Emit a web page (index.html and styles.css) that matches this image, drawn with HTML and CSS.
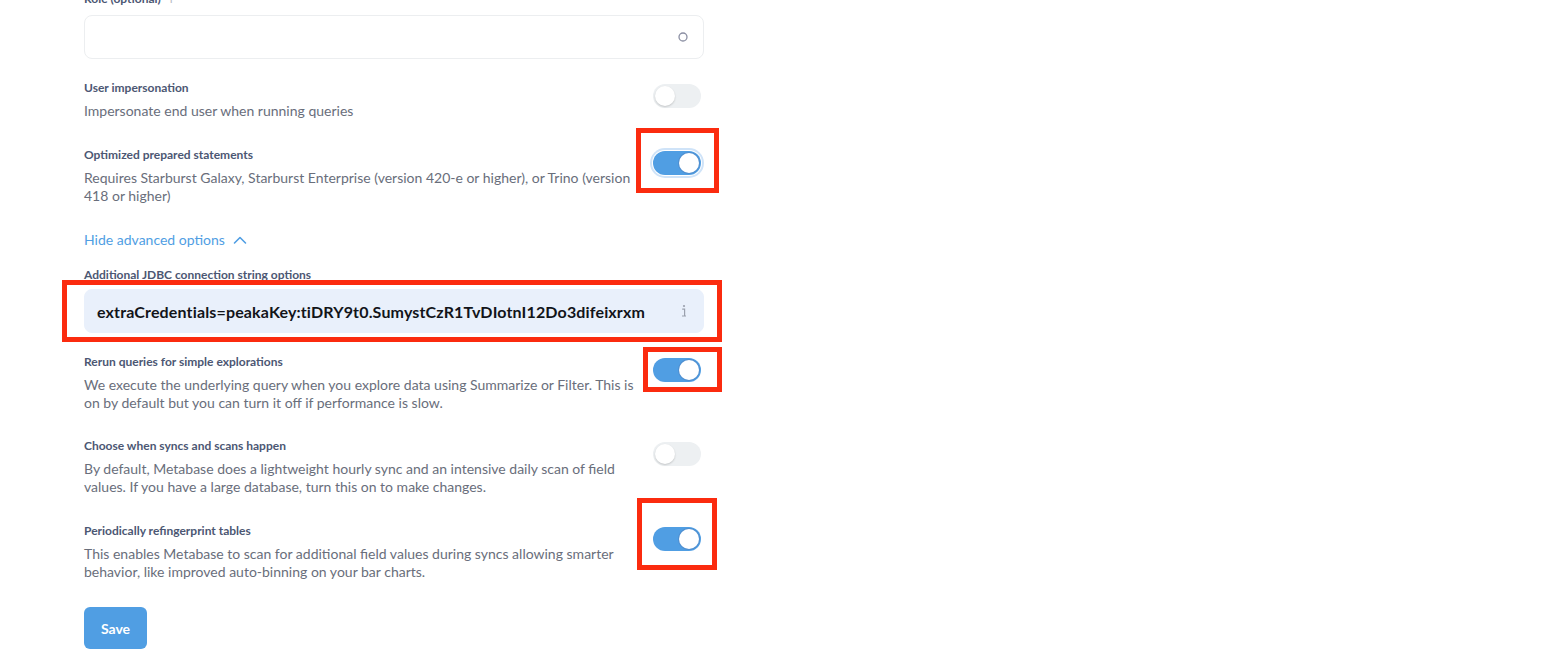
FILE: index.html
```html
<!DOCTYPE html>
<html>
<head>
<meta charset="utf-8">
<link rel="stylesheet" href="styles.css">
</head>
<body>
<div class="page">
  <div class="field">
    <div class="field-label">Role (optional) <span class="info-mark">i</span></div>
    <div class="input">
      <svg class="input-icon" width="12" height="12" viewBox="0 0 12 12"><circle cx="6" cy="6" r="4" fill="none" stroke="#8b8fa3" stroke-width="1.3"/></svg>
    </div>
  </div>

  <div class="setting s-first">
    <div class="setting-text">
      <div class="field-label">User impersonation</div>
      <div class="desc">Impersonate end user when running queries</div>
    </div>
    <div class="toggle"><span class="knob"></span></div>
  </div>

  <div class="setting s-gap">
    <div class="setting-text">
      <div class="field-label">Optimized prepared statements</div>
      <div class="desc">Requires Starburst Galaxy, Starburst Enterprise (version 420-e or higher), or Trino (version 418 or higher)</div>
    </div>
    <div class="toggle on focused"><span class="knob"></span></div>
  </div>

  <div class="advanced">
    <span>Hide advanced options</span>
    <svg width="14" height="10" viewBox="0 0 14 10"><path d="M1.5 8 L7 2.5 L12.5 8" fill="none" stroke="#509ee3" stroke-width="1.6" stroke-linecap="round" stroke-linejoin="round"/></svg>
  </div>

  <div class="field jdbc">
    <div class="field-label">Additional JDBC connection string options</div>
    <div class="input filled">
      <span class="input-value">extraCredentials=peakaKey:tiDRY9t0.SumystCzR1TvDIotnI12Do3difeixrxm</span>
      <svg class="input-icon" width="10" height="14" viewBox="0 0 10 14"><circle cx="5" cy="2" r="1.1" fill="#9aa0ad"/><path d="M3.2 5.2 H5.6 V11.8 M3 12 H7" fill="none" stroke="#9aa0ad" stroke-width="1.2"/></svg>
    </div>
  </div>

  <div class="setting s-after-input">
    <div class="setting-text">
      <div class="field-label">Rerun queries for simple explorations</div>
      <div class="desc">We execute the underlying query when you explore data using Summarize or Filter. This is on by default but you can turn it off if performance is slow.</div>
    </div>
    <div class="toggle on"><span class="knob"></span></div>
  </div>

  <div class="setting s-gap-tight">
    <div class="setting-text">
      <div class="field-label">Choose when syncs and scans happen</div>
      <div class="desc">By default, Metabase does a lightweight hourly sync and an intensive daily scan of field values. If you have a large database, turn this on to make changes.</div>
    </div>
    <div class="toggle"><span class="knob"></span></div>
  </div>

  <div class="setting s-gap">
    <div class="setting-text">
      <div class="field-label">Periodically refingerprint tables</div>
      <div class="desc">This enables Metabase to scan for additional field values during syncs allowing smarter behavior, like improved auto-binning on your bar charts.</div>
    </div>
    <div class="toggle on"><span class="knob"></span></div>
  </div>

  <button class="save">Save</button>
</div>

<div class="mark m1"></div>
<div class="mark m2"></div>
<div class="mark m3"></div>
<div class="mark m4"></div>
</body>
</html>
```

FILE: styles.css
```css
* { box-sizing: border-box; }
html, body { margin: 0; padding: 0; background: #fff; }
body {
  font-family: Lato, "Noto Sans", sans-serif;
  width: 1564px;
  height: 666px;
  overflow: hidden;
  position: relative;
}
.page {
  width: 620px;
  margin-left: 84px;
  margin-top: -9px;
}
.field-label {
  font-size: 12px;
  font-weight: 700;
  line-height: 16px;
  color: #4c5773;
}
.info-mark {
  color: #b8bbc3;
  font-weight: 400;
  margin-left: 6px;
}
.input {
  margin-top: 8px;
  height: 44px;
  border: 1px solid #eceef0;
  border-radius: 8px;
  display: flex;
  align-items: center;
  justify-content: space-between;
  padding: 0 14px 0 12px;
}
.input-icon { margin-left: auto; }
.jdbc { margin-top: 17px; }
.jdbc .input { margin-top: 6px; }
.input.filled {
  background: #e9f0fb;
  border-color: #e9f0fb;
}
.input-value {
  font-size: 16px;
  font-weight: 700;
  color: #121419;
  letter-spacing: 0.15px;
}
.setting {
  display: flex;
  align-items: flex-start;
  justify-content: space-between;
  padding-right: 3px;
}
.s-first { margin-top: 21px; }
.s-gap { margin-top: 27px; }
.s-gap-tight { margin-top: 26px; }
.s-after-input { margin-top: 21px; }
.setting-text { width: 556px; }
.desc {
  margin-top: 6px;
  font-size: 14px;
  line-height: 18px;
  color: #696e7b;
}
.toggle {
  margin-top: 4px;
  width: 48px;
  height: 24px;
  border-radius: 12px;
  background: #edf0f2;
  position: relative;
  flex: none;
}
.knob {
  position: absolute;
  top: 2px;
  left: 2px;
  width: 20px;
  height: 20px;
  border-radius: 50%;
  background: #fff;
  box-shadow: 0 1px 2px rgba(0,0,0,0.18);
}
.toggle.on { background: #509ee3; }
.toggle.on .knob {
  left: auto;
  right: 2px;
  box-shadow: 0 0 0 1px #4f8fd0;
}
.toggle.focused {
  box-shadow: 0 0 0 1px #fff, 0 0 0 3px #cfe3f8;
}
.advanced {
  margin-top: 25px;
  display: flex;
  align-items: center;
  gap: 8px;
  font-size: 14px;
  line-height: 20px;
  color: #509ee3;
}
.save {
  margin-top: 26px;
  width: 63px;
  height: 42px;
  border: none;
  border-radius: 6px;
  background: #509ee3;
  color: #fff;
  font-family: Lato, "Noto Sans", sans-serif;
  font-size: 14px;
  font-weight: 700;
  padding: 0;
}
.mark {
  position: absolute;
  border: 5px solid #fb2b0f;
}
.m1 { left: 636px; top: 128px; width: 83px; height: 65px; }
.m2 { left: 62px; top: 280px; width: 660px; height: 62px; }
.m3 { left: 643px; top: 347px; width: 79px; height: 45px; }
.m4 { left: 637px; top: 498px; width: 80px; height: 72px; }
```
